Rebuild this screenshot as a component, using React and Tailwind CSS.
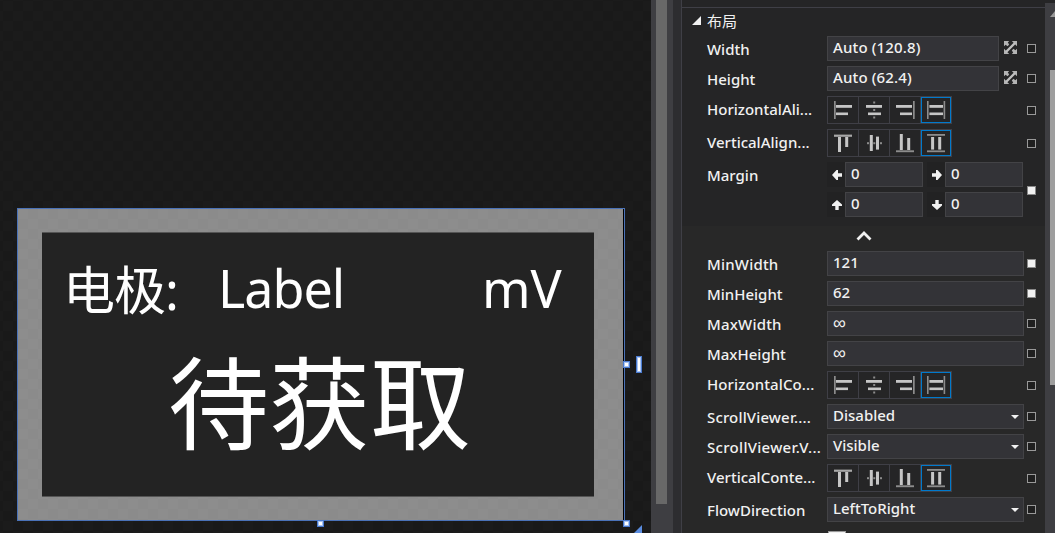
const BRIGHT = '#c6c6c6'
const DIM = '#8c8c8c'

const H_ICONS = [
  [[7, 5, 1.7, 18, DIM], [9, 9, 16, 2.8, BRIGHT], [9, 16.5, 12, 2.6, BRIGHT]],
  [[8, 9, 16, 2.8, BRIGHT], [10, 16.5, 13, 2.6, BRIGHT], [15.2, 5.5, 2, 2, DIM], [15.2, 13, 2, 2, DIM], [15.2, 20.5, 2, 2, DIM]],
  [[24, 5, 1.7, 18, DIM], [7, 9, 16, 2.8, BRIGHT], [11, 16.5, 12, 2.6, BRIGHT]],
  [[7, 5, 1.6, 18, DIM], [23.6, 5, 1.6, 18, DIM], [9.4, 9, 13.6, 2.8, BRIGHT], [9.4, 16.5, 13.6, 2.6, BRIGHT]],
]

const V_ICONS = [
  [[7, 5.6, 18, 2.2, '#a8a8a8'], [11, 8, 3, 15, BRIGHT], [18.2, 8, 3, 10, BRIGHT]],
  [[11.8, 6, 3, 16, BRIGHT], [18, 7.6, 3, 13, BRIGHT], [9, 13.2, 2, 2, DIM], [15.3, 13.2, 2, 2, DIM], [22, 13.2, 2, 2, DIM]],
  [[7, 21.3, 18, 1.9, DIM], [10.8, 5, 3, 16, BRIGHT], [18.2, 9, 3, 12, BRIGHT]],
  [[7, 5, 18, 1.8, DIM], [7, 21.4, 18, 1.8, DIM], [11.1, 8, 3, 12.6, BRIGHT], [18.2, 8, 3, 12.6, BRIGHT]],
]

function Marker({ filled }) {
  return (
    <div className="flex w-[9px] shrink-0 items-center justify-center self-center">
      {filled ? (
        <div className="size-[9px] border border-[#8a8a8a] bg-[#f1f1f1]" />
      ) : (
        <div className="size-[9px] border border-[#999999] bg-[#1f1f1f]" />
      )}
    </div>
  )
}

function Row({ label, tracking = 'tracking-normal', tall, filled, children }) {
  return (
    <div className={`flex w-[363px] shrink-0 ${tall ? 'h-[28px]' : 'h-[25px]'}`}>
      <div className={`w-[145px] shrink-0 whitespace-nowrap pl-[25px] ${tall ? 'leading-[26px]' : 'pt-[1px] leading-[25px]'} ${tracking}`}>{label}</div>
      <div className="flex w-[197px] shrink-0">{children}</div>
      <div className="ml-[3px] flex">
        <Marker filled={filled} />
      </div>
    </div>
  )
}

function Field({ children, width = 'w-[197px]' }) {
  return (
    <div className={`flex h-[25px] shrink-0 items-center justify-between border border-[#434346] bg-[#333337] pb-[2px] pl-[5px] pr-[4px] leading-none ${width}`}>
      {children}
    </div>
  )
}

function Select({ children }) {
  return (
    <Field>
      {children}
      <svg className="mt-[3px] h-[4px] w-[8px]" viewBox="0 0 8 4">
        <path d="M0 0H8L4 4Z" fill="#f1f1f1" />
      </svg>
    </Field>
  )
}

function Infinity() {
  return <span className="font-['Liberation_Sans',sans-serif] text-[18px] font-medium">∞</span>
}

function AutoSize() {
  return (
    <svg className="ml-[5px] mt-[5px] h-[13px] w-[13px]" viewBox="0 0 13 13">
      <path d="M0 0H5.2L3.8 1.6L5.2 3.6L3.6 5.2L1.6 3.8L0 5.2ZM13 0V5.2L7.8 0ZM0 13V7.8L5.2 13ZM13 13H7.8L9.2 11.4L7.8 9.4L9.4 7.8L11.4 9.2L13 7.8Z" fill="#b4b4b4" />
      <path d="M2 11L11 2" stroke="#c0c0c0" strokeWidth="2.4" />
    </svg>
  )
}

function AlignGroup({ icons }) {
  return (
    <div className="flex h-[28px] w-[125px] border border-[#3f3f46] bg-[#252526]">
      {icons.map((rects, i) => (
        <div key={i} className={i === 3 ? 'h-[26px] w-[30px] border border-[#007acc]' : 'h-[26px] w-[31px] border-r border-[#3f3f46]'}>
          <svg
            className={i === 3 ? '-ml-px -mt-px block h-[26px] w-[30px]' : 'block h-[26px] w-[30px]'}
            viewBox="1 1 30 26"
          >
            {rects.map(([x, y, w, h, fill], k) => (
              <rect key={k} x={x} y={y} width={w} height={h} fill={fill} />
            ))}
          </svg>
        </div>
      ))}
    </div>
  )
}

function MarginField({ rotation }) {
  return (
    <div className="flex w-[96px]">
      <div className="flex w-[18px] items-center justify-center bg-[#222223]">
        <svg className={`ml-[2px] mt-[1px] size-[10px] ${rotation}`} viewBox="0 0 10 10">
          <path d="M0 5L4.5 0H6V3.3H10V6.7H6V10H4.5Z" fill="#f1f1f1" />
        </svg>
      </div>
      <Field width="w-[78px]">0</Field>
    </div>
  )
}

function Handle({ className }) {
  return <div className={`absolute border border-[#4a7bd0] bg-white ring-1 ring-inset ring-[#a9c4f2] ${className}`} />
}

function Designer() {
  return (
    <div className="relative h-[533px] w-[651px] shrink-0 overflow-hidden bg-[#1a1a1a] bg-[repeating-conic-gradient(#191919_0%_25%,#1b1b1b_0%_50%)] bg-[length:20px_20px] bg-[position:3px_1px] pl-[17px] pt-[208px] font-['Noto_Sans','Noto_Sans_CJK_SC',sans-serif] text-white">
      <div className="h-[313px] w-[608px] border border-[#4a72b8] bg-black pr-[1px]">
        <div className="h-full bg-[#8c8c8c] bg-[repeating-conic-gradient(#8b8b8b_0%_25%,#8d8d8d_0%_50%)] bg-[length:20px_20px] pl-[24px] pt-[23px]">
          <div className="h-[265px] w-[552px] border-y border-[#555555] bg-[#232323]">
            <div className="flex h-[112px] whitespace-nowrap pl-[21px] pt-[20px] text-[52px] leading-[70px]">
              <span className="w-[155px] font-['Noto_Sans_CJK_SC',sans-serif] tracking-[-1px]">电极<span className="font-['Noto_Sans',sans-serif]">:</span></span>
              <span className="w-[264px] tracking-[-1px]">Label</span>
              <span>mV</span>
            </div>
            <div className="-mt-[3px] whitespace-nowrap pl-[126px] font-['Noto_Sans_CJK_SC',sans-serif] text-[101px] leading-[112px]">待获取</div>
          </div>
        </div>
      </div>
      <Handle className="left-[317px] top-[520px] size-[7px]" />
      <Handle className="left-[623px] top-[520px] size-[7px]" />
      <Handle className="left-[623px] top-[361px] size-[7px]" />
      <Handle className="left-[636px] top-[356px] h-[17px] w-[6px]" />
      <svg className="absolute left-[634px] top-[525px] h-[8px] w-[8px]" viewBox="0 0 8 8">
        <path d="M8 0V8H0Z" fill="#5b8de0" />
      </svg>
    </div>
  )
}

export default function App() {
  return (
    <div className="flex h-[533px] w-[1055px] overflow-hidden bg-[#2d2d30] font-['Noto_Sans','Noto_Sans_CJK_SC',sans-serif] text-[15px] text-[#f1f1f1]">
      <Designer />
      <div className="w-[22px] shrink-0 bg-[#3e3e42] pl-[5px]">
        <div className="h-[504px] w-[11px] bg-[#686868]" />
      </div>
      <div className="w-[8px] shrink-0 bg-[#2d2d30]" />
      <div className="flex h-[533px] w-[364px] shrink-0 flex-col gap-[5px] overflow-hidden border-l border-[#3f3f46] bg-[#252526] font-medium">
        <div className="h-[31px] shrink-0 pt-[7px]">
          <div className="flex h-[24px] items-center border-t border-[#3f3f46] pl-[10px] pt-[4px]">
            <svg className="mr-[7px] h-[9px] w-[9px] -translate-y-px" viewBox="0 0 9 9">
              <path d="M9 0V9H0Z" fill="#f1f1f1" />
            </svg>
            <span className="-ml-px font-normal">布局</span>
          </div>
        </div>
        <Row label="Width">
          <Field width="w-[172px]"><span className="tracking-[0.15px]">Auto (120.8)</span></Field>
          <AutoSize />
        </Row>
        <Row label="Height">
          <Field width="w-[172px]"><span className="tracking-[0.15px]">Auto (62.4)</span></Field>
          <AutoSize />
        </Row>
        <Row label="HorizontalAli..." tall><AlignGroup icons={H_ICONS} /></Row>
        <Row label="VerticalAlign..." tall><AlignGroup icons={V_ICONS} /></Row>
        <div className="flex h-[59px] w-[363px] shrink-0">
          <div className="w-[145px] shrink-0 pl-[25px] pt-[1px] leading-[25px]">Margin</div>
          <div className="grid w-[197px] shrink-0 grid-cols-[96px_96px] content-start gap-x-[4px] gap-y-[5px]">
            <MarginField rotation="rotate-0" />
            <MarginField rotation="rotate-180" />
            <MarginField rotation="rotate-90" />
            <MarginField rotation="-rotate-90" />
          </div>
          <div className="ml-[3px] flex pb-[2px]"><Marker filled /></div>
        </div>
        <div className="flex h-[307px] shrink-0 flex-col gap-[5px] bg-[#282828]">
          <div className="h-[20px] shrink-0 pl-[174px] pt-[5px]">
            <svg className="block h-[10px] w-[16px]" viewBox="0 0 16 10">
              <path d="M1.5 8.5L8 2L14.5 8.5" fill="none" stroke="#f1f1f1" strokeWidth="2.8" />
            </svg>
          </div>
          <Row label="MinWidth" tracking="tracking-[0.2px]" filled><Field>121</Field></Row>
          <Row label="MinHeight" filled><Field>62</Field></Row>
          <Row label="MaxWidth" tracking="tracking-[0.2px]"><Field><Infinity /></Field></Row>
          <Row label="MaxHeight"><Field><Infinity /></Field></Row>
          <Row label="HorizontalCo..." tracking="tracking-[0.1px]" tall><AlignGroup icons={H_ICONS} /></Row>
          <Row label="ScrollViewer...." tracking="tracking-[0.15px]"><Select>Disabled</Select></Row>
          <Row label="ScrollViewer.V..." tracking="tracking-[0.3px]"><Select>Visible</Select></Row>
          <Row label="VerticalConte..." tall><AlignGroup icons={V_ICONS} /></Row>
          <Row label="FlowDirection"><Select>LeftToRight</Select></Row>
          <div className="shrink-0 pl-[146px] pt-[4px]">
            <div className="h-[18px] w-[18px] border border-[#999999] bg-[#f1f1f1]" />
          </div>
        </div>
      </div>
      <div className="w-[10px] shrink-0 border-t-[3px] border-[#252526] bg-[#3e3e42] pl-[5px] pt-[8px]">
        <svg className="block h-[6px] w-[5px]" viewBox="0 0 5 6">
          <path d="M0 6L5 0V6Z" fill="#999999" />
        </svg>
        <div className="mt-[53px] h-[315px] bg-[#9e9e9e]" />
      </div>
    </div>
  )
}
